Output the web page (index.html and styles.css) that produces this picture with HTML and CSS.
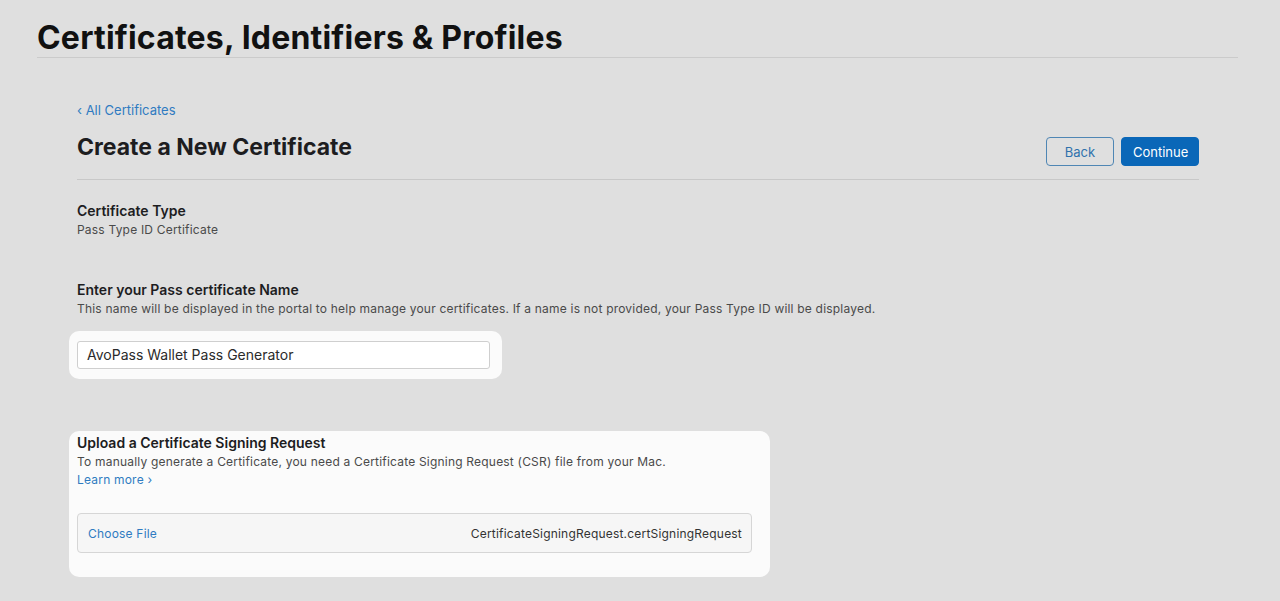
FILE: index.html
```html
<!DOCTYPE html>
<html lang="en">
<head>
<meta charset="utf-8">
<title>Certificates, Identifiers &amp; Profiles</title>
<link rel="stylesheet" href="styles.css">
</head>
<body>
<header class="top">
  <h1 class="top-title">Certificates, Identifiers &amp; Profiles</h1>
</header>
<main class="page">
  <a class="back-link" href="#">‹ All Certificates</a>
  <div class="page-head">
    <h2 class="page-title">Create a New Certificate</h2>
    <div class="actions">
      <button class="btn btn-outline">Back</button>
      <button class="btn btn-primary">Continue</button>
    </div>
  </div>

  <section class="field type-field">
    <h3 class="field-title">Certificate Type</h3>
    <p class="field-desc">Pass Type ID Certificate</p>
  </section>

  <section class="field name-field">
    <h3 class="field-title">Enter your Pass certificate Name</h3>
    <p class="field-desc">This name will be displayed in the portal to help manage your certificates. If a name is not provided, your Pass Type ID will be displayed.</p>
    <div class="highlight name-box">
      <div class="text-input">AvoPass Wallet Pass Generator</div>
    </div>
  </section>

  <section class="highlight upload-box">
    <h3 class="field-title">Upload a Certificate Signing Request</h3>
    <p class="field-desc">To manually generate a Certificate, you need a Certificate Signing Request (CSR) file from your Mac.</p>
    <a class="learn-more" href="#">Learn more ›</a>
    <div class="file-row">
      <span class="choose">Choose File</span>
      <span class="file-name">CertificateSigningRequest.certSigningRequest</span>
    </div>
  </section>
</main>
</body>
</html>
```

FILE: styles.css
```css
* { box-sizing: border-box; }
html, body { margin: 0; padding: 0; }
body {
  background: #dfdfdf;
  font-family: Inter, "Noto Sans", "Liberation Sans", sans-serif;
  color: #1d1d1f;
  width: 1280px;
  height: 601px;
  overflow: hidden;
}
.top {
  margin: 0 42px 0 37px;
  padding-top: 19px;
  border-bottom: 1px solid #cbcbcb;
}
.top-title {
  margin: 0;
  font-size: 32px;
  line-height: 38px;
  font-weight: 700;
  letter-spacing: 0.2px;
  color: #111;
}
.page {
  width: 1122px;
  margin-left: 77px;
  padding-top: 43px;
}
.back-link {
  display: block;
  font-size: 13px;
  line-height: 18px;
  color: #2f7bc1;
  text-decoration: none;
}
.page-head {
  display: flex;
  justify-content: space-between;
  align-items: flex-start;
  padding: 12px 0 13px;
  border-bottom: 1px solid #c8c8c8;
}
.page-title {
  margin: 0;
  font-size: 23px;
  line-height: 32px;
  font-weight: 700;
  color: #1d1d1f;
}
.actions { display: flex; gap: 7px; margin-top: 6px; }
.btn {
  font-family: inherit;
  font-size: 13px;
  height: 29px;
  border-radius: 4px;
  padding: 0 11px;
  cursor: pointer;
}
.btn-outline {
  background: transparent;
  border: 1px solid #4f86b4;
  color: #2f72ad;
  width: 68px;
}
.btn-primary {
  background: #0a67b8;
  border: 1px solid #0a67b8;
  color: #fff;
  width: 78px;
}
.field-title {
  margin: 0;
  font-size: 14px;
  line-height: 20px;
  font-weight: 600;
  color: #1d1d1f;
}
.field-desc {
  margin: 0;
  font-size: 12px;
  line-height: 18px;
  letter-spacing: 0.2px;
  color: #4a4a4a;
}
.type-field { padding-top: 21px; }
.name-field { padding-top: 41px; }
.highlight {
  background: #fbfbfb;
  border-radius: 10px;
  margin-left: -8px;
}
.name-box {
  width: 433px;
  margin-top: 13px;
  padding: 10px 12px 10px 8px;
}
.text-input {
  height: 28px;
  background: #fff;
  border: 1px solid #cfcfcf;
  border-radius: 3px;
  padding: 0 9px;
  font-size: 14px;
  line-height: 26px;
  color: #2b2b2b;
}
.upload-box {
  width: 701px;
  margin-top: 52px;
  padding: 2px 18px 24px 8px;
}
.learn-more {
  display: block;
  font-size: 12px;
  line-height: 18px;
  letter-spacing: 0.2px;
  color: #2f7bc1;
  text-decoration: none;
}
.file-row {
  margin-top: 24px;
  height: 40px;
  display: flex;
  align-items: center;
  justify-content: space-between;
  padding: 0 9px 0 10px;
  background: #f6f6f6;
  border: 1px solid #d6d6d6;
  border-radius: 4px;
  font-size: 12px;
  letter-spacing: 0.2px;
}
.choose { color: #2f7bc1; }
.file-name { color: #333; }
```
